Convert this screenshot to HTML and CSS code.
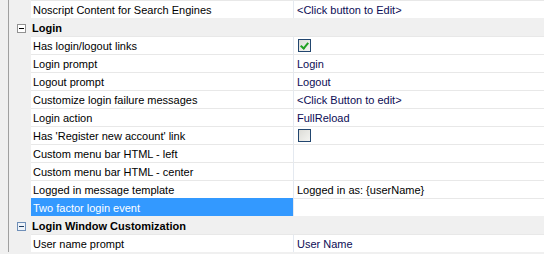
FILE: index.html
```html
<!DOCTYPE html>
<html lang="en">
<head>
    <meta charset="UTF-8">
    <title>Property Grid</title>
    <link rel="stylesheet" href="styles.css">
</head>
<body>
    <div class="grid">
        <div class="row">
            <div class="gutter"></div>
            <div class="name">Noscript Content for Search Engines</div>
            <div class="value">&lt;Click button to Edit&gt;</div>
        </div>

        <div class="row cat">
            <div class="gutter"><span class="toggle"></span></div>
            <div class="cat-title">Login</div>
        </div>
        <div class="row">
            <div class="gutter"></div>
            <div class="name">Has login/logout links</div>
            <div class="value"><span class="check on"></span></div>
        </div>
        <div class="row">
            <div class="gutter"></div>
            <div class="name">Login prompt</div>
            <div class="value">Login</div>
        </div>
        <div class="row">
            <div class="gutter"></div>
            <div class="name">Logout prompt</div>
            <div class="value">Logout</div>
        </div>
        <div class="row">
            <div class="gutter"></div>
            <div class="name">Customize login failure messages</div>
            <div class="value">&lt;Click Button to edit&gt;</div>
        </div>
        <div class="row">
            <div class="gutter"></div>
            <div class="name">Login action</div>
            <div class="value">FullReload</div>
        </div>
        <div class="row">
            <div class="gutter"></div>
            <div class="name">Has 'Register new account' link</div>
            <div class="value"><span class="check"></span></div>
        </div>
        <div class="row">
            <div class="gutter"></div>
            <div class="name">Custom menu bar HTML - left</div>
            <div class="value"></div>
        </div>
        <div class="row">
            <div class="gutter"></div>
            <div class="name">Custom menu bar HTML - center</div>
            <div class="value"></div>
        </div>
        <div class="row">
            <div class="gutter"></div>
            <div class="name">Logged in message template</div>
            <div class="value plain">Logged in as: {userName}</div>
        </div>
        <div class="row selected">
            <div class="gutter"></div>
            <div class="name">Two factor login event</div>
            <div class="value"></div>
        </div>

        <div class="row cat">
            <div class="gutter"><span class="toggle hot"></span></div>
            <div class="cat-title">Login Window Customization</div>
        </div>
        <div class="row">
            <div class="gutter"></div>
            <div class="name">User name prompt</div>
            <div class="value">User Name</div>
        </div>
    </div>
</body>
</html>
```
FILE: styles.css
```css
body {
    margin: 0;
    background-color: #f0f0f0;
    font-family: "Liberation Sans", Arial, sans-serif;
    font-size: 11px;
    overflow: hidden;
}

.grid {
    margin-left: 8px;
    border-left: 1px solid #a0a0a0;
}

.row {
    display: flex;
    height: 18px;
}

.gutter {
    width: 22px;
    flex-shrink: 0;
    background-color: #f0f0f0;
    position: relative;
}

.name, .value {
    height: 17px;
    line-height: 19px;
    border-top: 1px solid #e8e8e8;
    background-color: #fff;
    white-space: nowrap;
    overflow: hidden;
}

.name {
    width: 260px;
    flex-shrink: 0;
    padding-left: 2px;
    color: #000;
}

.value {
    flex: 1;
    padding-left: 3px;
    border-left: 1px solid #e4e9f0;
    color: #0c0c55;
}

.value.plain {
    color: #000;
}

.selected .name {
    background-color: #3399ff;
    border-top-color: #3399ff;
    color: #fff;
}

.cat {
    background-color: #f0f0f0;
}

.cat-title {
    padding-left: 1px;
    line-height: 20px;
    font-weight: bold;
}

.toggle {
    position: absolute;
    left: 8px;
    top: 6px;
    width: 7px;
    height: 7px;
    border: 1px solid #919191;
    background-color: #fff;
}

.toggle::after {
    content: "";
    position: absolute;
    left: 1px;
    top: 3px;
    width: 5px;
    height: 1px;
    background-color: #000;
}

.toggle.hot {
    border-color: #6f8fb8;
    background-color: #eef3f9;
}

.toggle.hot::after {
    background-color: #1c3b62;
}

.check {
    display: inline-block;
    vertical-align: top;
    margin-top: 2px;
    margin-left: 1px;
    width: 11px;
    height: 11px;
    border: 1px solid #22466f;
    background: linear-gradient(135deg, #dcdcd7, #f4f4f1);
    position: relative;
}

.check.on::after {
    content: "";
    position: absolute;
    left: 3px;
    top: 1px;
    width: 3px;
    height: 6px;
    border-right: 2px solid #21a121;
    border-bottom: 2px solid #21a121;
    transform: rotate(40deg);
}
```
